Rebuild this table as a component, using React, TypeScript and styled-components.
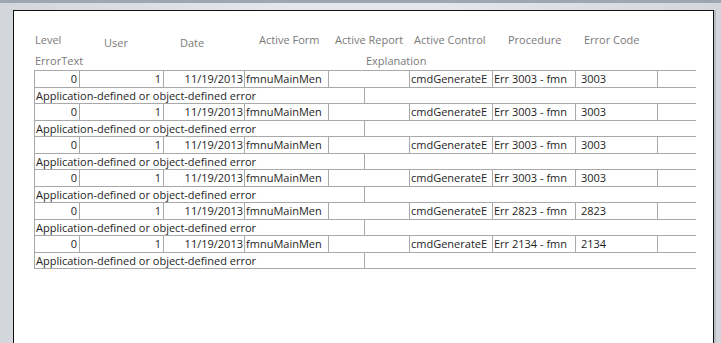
import React from "react";
import styled, { createGlobalStyle } from "styled-components";

const GlobalStyle = createGlobalStyle`
  html, body {
    margin: 0;
    padding: 0;
    overflow: hidden;
  }
  body {
    font-family: "Open Sans", "Noto Sans", sans-serif;
  }
`;

const COLS = "45px 84px 81px 84px 81px 83px 83px 82px 39px";
const LINE = "#a9a9a9";

const Window = styled.div`
  width: 721px;
  height: 343px;
  display: flex;
  flex-direction: column;
  background: linear-gradient(to right, #d3d7dc, #e4e7eb 40%, #e4e7eb 60%, #d3d7dc);
  overflow: hidden;
`;

const TopStrip = styled.div`
  height: 3px;
  flex: none;
  background: #9ea6b0;
`;

const Canvas = styled.div`
  flex: 1;
  display: flex;
  padding: 7px 7px 0 13px;
  min-height: 0;
`;

const Page = styled.div`
  flex: 1;
  background: #fff;
  border: 1px solid #111;
  border-bottom: none;
  box-shadow: 2px 0 0 #b9bec5;
  padding: 21px 0 0 20px;
`;

const HeaderRow = styled.div`
  display: grid;
  grid-template-columns: ${COLS};
  height: 17px;
  align-items: start;
`;

const HeaderLabel = styled.div<{ $indent: number; $drop?: number }>`
  padding-left: ${({ $indent }) => $indent}px;
  margin-top: ${({ $drop }) => $drop ?? 0}px;
  font-size: 11px;
  line-height: 15px;
  color: #7a7a7a;
  white-space: nowrap;
`;

const SubHeaderRow = styled.div`
  display: grid;
  grid-template-columns: 330px 332px;
  margin-top: 4px;
  height: 17px;
`;

const Table = styled.div`
  width: 662px;
  border-bottom: 1px solid ${LINE};
`;

const DetailRow = styled.div`
  display: grid;
  grid-template-columns: ${COLS};
  height: 16px;
  border-top: 1px solid ${LINE};
`;

const TextRow = styled.div`
  display: grid;
  grid-template-columns: 330px 332px;
  height: 15px;
  border-top: 1px solid ${LINE};
`;

const Cell = styled.div<{ $align?: "left" | "right"; $pad?: number }>`
  border-left: 1px solid ${LINE};
  text-align: ${({ $align }) => $align ?? "left"};
  padding: ${({ $align, $pad }) =>
    $align === "right" ? `0 ${$pad ?? 1}px 0 0` : `0 0 0 ${$pad ?? 1}px`};
  font-size: 11px;
  line-height: 16px;
  color: #1e1e1e;
  white-space: nowrap;
  overflow: hidden;
`;

const headers: { label: string; indent: number; drop?: number }[] = [
  { label: "Level", indent: 1 },
  { label: "User", indent: 25, drop: 3 },
  { label: "Date", indent: 17, drop: 3 },
  { label: "Active Form", indent: 15 },
  { label: "Active Report", indent: 7 },
  { label: "Active Control", indent: 5 },
  { label: "Procedure", indent: 16 },
  { label: "Error Code", indent: 9 },
];

const codes = ["3003", "3003", "3003", "3003", "2823", "2134"];

export default function App() {
  return (
    <>
      <GlobalStyle />
      <Window>
        <TopStrip />
        <Canvas>
          <Page>
            <HeaderRow>
              {headers.map((h) => (
                <HeaderLabel key={h.label} $indent={h.indent} $drop={h.drop}>
                  {h.label}
                </HeaderLabel>
              ))}
            </HeaderRow>
            <SubHeaderRow>
              <HeaderLabel $indent={1}>ErrorText</HeaderLabel>
              <HeaderLabel $indent={2}>Explanation</HeaderLabel>
            </SubHeaderRow>
            <Table>
              {codes.map((code, i) => (
                <React.Fragment key={i}>
                  <DetailRow>
                    <Cell $align="right" $pad={2}>0</Cell>
                    <Cell $align="right" $pad={2}>1</Cell>
                    <Cell $align="right">11/19/2013</Cell>
                    <Cell>fmnuMainMen</Cell>
                    <Cell />
                    <Cell>cmdGenerateE</Cell>
                    <Cell>Err {code} - fmn</Cell>
                    <Cell $pad={5}>{code}</Cell>
                    <Cell />
                  </DetailRow>
                  <TextRow>
                    <Cell>Application-defined or object-defined error</Cell>
                    <Cell />
                  </TextRow>
                </React.Fragment>
              ))}
            </Table>
          </Page>
        </Canvas>
      </Window>
    </>
  );
}
